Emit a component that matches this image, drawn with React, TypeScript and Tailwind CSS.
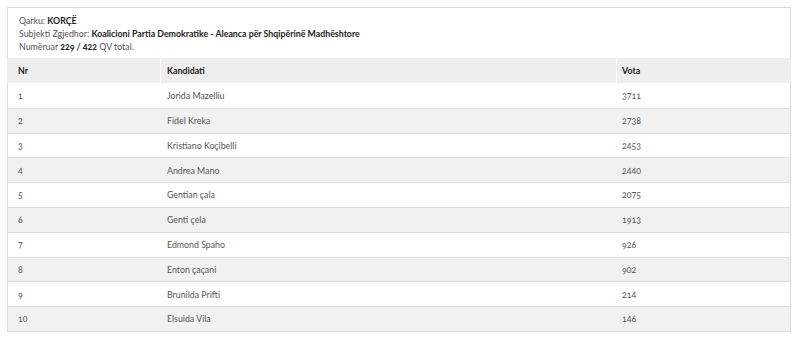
// Tabela e rezultateve për kandidatët e një subjekti në një qark

const kandidatet = [
  { nr: 1, emri: 'Jorida Mazelliu', vota: 3711 },
  { nr: 2, emri: 'Fidel Kreka', vota: 2738 },
  { nr: 3, emri: 'Kristiano Koçibelli', vota: 2453 },
  { nr: 4, emri: 'Andrea Mano', vota: 2440 },
  { nr: 5, emri: 'Gentian çala', vota: 2075 },
  { nr: 6, emri: 'Genti çela', vota: 1913 },
  { nr: 7, emri: 'Edmond Spaho', vota: 926 },
  { nr: 8, emri: 'Enton çaçani', vota: 902 },
  { nr: 9, emri: 'Brunilda Prifti', vota: 214 },
  { nr: 10, emri: 'Elsuida Vila', vota: 146 },
]

export default function App() {
  return (
    <div className="w-[800px] h-[340px] bg-white font-['Lato','Liberation_Sans',sans-serif] text-[8.8px] text-[#555] oldstyle-nums">
      <div className="ml-[7px] pt-[7px] w-[784px]">

        {/* Info e qarkut */}
        <div className="border border-b-0 border-[#dcdcdc] pl-[11px] pt-[6px] h-[51px] leading-[13px]">
          <p>
            Qarku: <b className="text-[#222]">KORÇË</b>
          </p>
          <p>
            Subjekti Zgjedhor:{' '}
            <b className="text-[#222]">
              Koalicioni Partia Demokratike - Aleanca për Shqipërinë Madhështore
            </b>
          </p>
          <p>
            Numëruar <b className="text-[#222]">229 / 422</b> QV total.
          </p>
        </div>

        {/* Koka e tabelës */}
        <div className="grid grid-cols-[154px_456px_1fr] h-[25px] bg-[#eeeeee] font-bold text-[#222] items-center">
          <div className="pl-[11px] h-full flex items-center border-r border-white">Nr</div>
          <div className="pl-[6px] h-full flex items-center border-r border-white">Kandidati</div>
          <div className="pl-[5px]">Vota</div>
        </div>

        {/* Rreshtat */}
        <div className="border-x border-b border-[#dcdcdc]">
          {kandidatet.map((k, i) => (
            <div
              key={k.nr}
              className={`grid grid-cols-[153px_456px_1fr] h-[24.8px] items-center ${
                i > 0 ? 'border-t border-[#dedede]' : ''
              } ${i % 2 === 1 ? 'bg-[#f1f1f1]' : 'bg-white'}`}
            >
              <div className="pl-[10px]">{k.nr}</div>
              <div className="pl-[6px]">{k.emri}</div>
              <div className="pl-[5px]">{k.vota}</div>
            </div>
          ))}
        </div>

      </div>
    </div>
  )
}
